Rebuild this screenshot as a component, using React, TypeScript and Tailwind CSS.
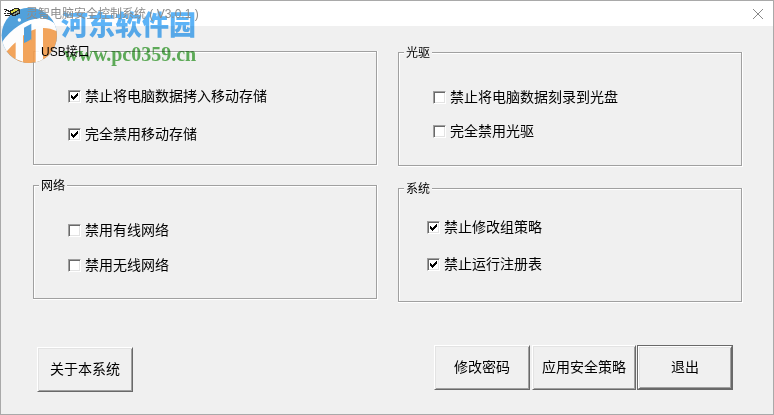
import type { ReactNode } from "react";

function GroupBox({ title, className = "", children }: { title: string; className?: string; children: ReactNode }) {
  return (
    <fieldset className={`relative min-w-0 ${className}`}>
      <div className="pointer-events-none absolute inset-0 -right-px -bottom-px border border-white" />
      <div className="pointer-events-none absolute inset-0 border border-[#a0a0a0] shadow-[inset_1px_1px_0_#fff]" />
      <legend className="absolute -top-[7px] left-1.5 px-0.5 text-[12px] leading-4">
        <span className="absolute inset-0 bg-[#f0f0f0]" />
        <span className="relative z-10">{title}</span>
      </legend>
      {children}
    </fieldset>
  );
}

function CheckBox({ id, label, checked = false }: { id: string; label: string; checked?: boolean }) {
  return (
    <div className="flex h-5 items-center gap-1">
      <span className="relative size-[13px] shrink-0">
        <input
          id={id}
          type="checkbox"
          defaultChecked={checked}
          className="peer block size-[13px] appearance-none border border-t-[#a0a0a0] border-r-white border-b-white border-l-[#a0a0a0] bg-white shadow-[inset_1px_1px_0_#696969,inset_-1px_-1px_0_#e3e3e3]"
        />
        <svg
          viewBox="0 0 13 13"
          shapeRendering="crispEdges"
          className="pointer-events-none absolute inset-0 hidden size-[13px] peer-checked:block"
        >
          <path d="M3 5h1v3H3zM4 6h1v3H4zM5 7h1v3H5zM6 6h1v3H6zM7 5h1v3H7zM8 4h1v3H8zM9 3h1v3H9z" />
        </svg>
      </span>
      <label htmlFor={id} className="text-[14px] leading-5 whitespace-nowrap">
        {label}
      </label>
    </div>
  );
}

function PushButton({ className = "", children }: { className?: string; children: ReactNode }) {
  return (
    <button
      type="button"
      className={`border border-t-white border-r-[#696969] border-b-[#696969] border-l-white bg-[#f0f0f0] pb-0.5 text-[14px] leading-5 whitespace-nowrap shadow-[inset_1px_1px_0_#e3e3e3,inset_-1px_-1px_0_#a0a0a0] ${className}`}
    >
      {children}
    </button>
  );
}

function AppIcon() {
  return (
    <svg viewBox="0 0 16 16" className="relative z-10 size-4 shrink-0" shapeRendering="crispEdges">
      <path d="M0 3h3v1H0zM2 4h3v1H2zM1 5h1v1H1zM4 5h2v1H4zM0 7h2v1H0zM3 7h3v1H3zM1 9h5v1H1z" fill="#222" />
      <path d="M6 4h2V3h2V2h5v1h1v5h-2v1h-2v1H8V9H6z" fill="#222" />
      <path d="M10 3h4v1h-1v1h-2v1H9v1H7V5h2V4h1z" fill="#d9d84a" />
      <path d="M13 5h2v2h-2v1h-2v1H9V8h1V7h2V6h1z" fill="#8d9a8a" />
    </svg>
  );
}

function Logo() {
  return (
    <svg viewBox="0 0 174 192" className="absolute top-0 left-0 h-16 w-[58px] opacity-90">
      <clipPath id="disc">
        <circle cx="85" cy="103" r="83" />
      </clipPath>
      <g clipPath="url(#disc)">
        <path d="M0 0h174v192H0z" fill="#3f97d8" />
        <path d="M6 152C40 118 66 92 104 82c26-6 50-2 70 8v102H6z" fill="#f39c4b" />
        <path d="M0 128C30 82 76 54 116 52c24 0 42 10 54 26v14c-22-12-44-14-66-8-38 11-64 44-94 74H0z" fill="#fff" />
        <path d="M40 92l26-16v106l-22-8v-50l-16 10zM94 66l32-20v134l-22 8V82l-10 4z" fill="#fff" />
        <path d="M69 80l22-12v50l-22 8z" fill="#3f97d8" />
        <path d="M69 128l22-14v78H69z" fill="#f39c4b" />
        <path d="M130 88l14-2v92l-14 6z" fill="#f39c4b" />
      </g>
      <circle cx="55" cy="57" r="5" fill="#fff" />
    </svg>
  );
}

function Watermark() {
  return (
    <>
      <div className="pointer-events-none absolute top-0 left-0">
        <Logo />
      </div>
      <div className="pointer-events-none absolute top-0 left-[60px] mix-blend-multiply">
        <p className="mt-[9px] font-['Liberation_Serif','Noto_Sans_CJK_SC',serif] text-[27px] leading-8 font-black whitespace-nowrap text-[#5cb3f7]">
          河东软件园
        </p>
        <p className="mt-0.5 ml-[3px] font-['Liberation_Serif',serif] text-[20px] leading-5 font-bold whitespace-nowrap text-[#62b45c]">
          www.pc0359.cn
        </p>
      </div>
    </>
  );
}

export default function App() {
  return (
    <main className="relative flex min-h-screen flex-col border border-[#a9a9a9] bg-[#f0f0f0] font-['Liberation_Sans','Noto_Sans_CJK_SC',sans-serif] text-black">
      <header className="flex h-[25px] items-center bg-white pr-[9px] pl-[3px]">
        <AppIcon />
        <h1 className="relative z-10 ml-1.5 flex-1 text-[12px] leading-4 text-[#8c8c8c]">灵智电脑安全控制系统 ( V3.0.1 )</h1>
        <button type="button" aria-label="关闭" className="size-3">
          <svg viewBox="0 0 12 12" className="size-3" fill="none" stroke="#888">
            <path d="M1 1l10 10M11 1L1 11" />
          </svg>
        </button>
      </header>

      <div className="flex flex-1 flex-col pt-[25px] pr-[31px] pl-8">
        <div className="grid grid-cols-2 gap-x-[21px] gap-y-[19px]">
          <GroupBox title="USB接口" className="flex h-[114px] flex-col gap-[18px] pt-[35px] pl-[35px]">
            <CheckBox id="usb-copy" label="禁止将电脑数据拷入移动存储" checked />
            <CheckBox id="usb-all" label="完全禁用移动存储" checked />
          </GroupBox>
          <GroupBox title="光驱" className="mt-px flex h-[114px] flex-col gap-3.5 pt-[35px] pl-[35px]">
            <CheckBox id="cd-burn" label="禁止将电脑数据刻录到光盘" />
            <CheckBox id="cd-all" label="完全禁用光驱" />
          </GroupBox>
          <GroupBox title="网络" className="flex h-[114px] flex-col gap-[15px] pt-[35px] pl-[35px]">
            <CheckBox id="net-wired" label="禁用有线网络" />
            <CheckBox id="net-wireless" label="禁用无线网络" />
          </GroupBox>
          <GroupBox title="系统" className="mt-[3px] flex h-[114px] flex-col gap-[17px] pt-[29px] pl-[29px]">
            <CheckBox id="sys-policy" label="禁止修改组策略" checked />
            <CheckBox id="sys-registry" label="禁止运行注册表" checked />
          </GroupBox>
        </div>

        <footer className="mt-[43px] flex items-start pr-[9px] pl-1">
          <PushButton className="mt-0.5 h-[45px] w-24">关于本系统</PushButton>
          <div className="ml-auto flex gap-0.5">
            <PushButton className="h-[45px] w-24">修改密码</PushButton>
            <PushButton className="h-[45px] w-[104px]">应用安全策略</PushButton>
            <div className="-ml-px border border-[#696969]">
              <PushButton className="block h-[43px] w-[94px]">退出</PushButton>
            </div>
          </div>
        </footer>
      </div>
      <Watermark />
    </main>
  );
}
